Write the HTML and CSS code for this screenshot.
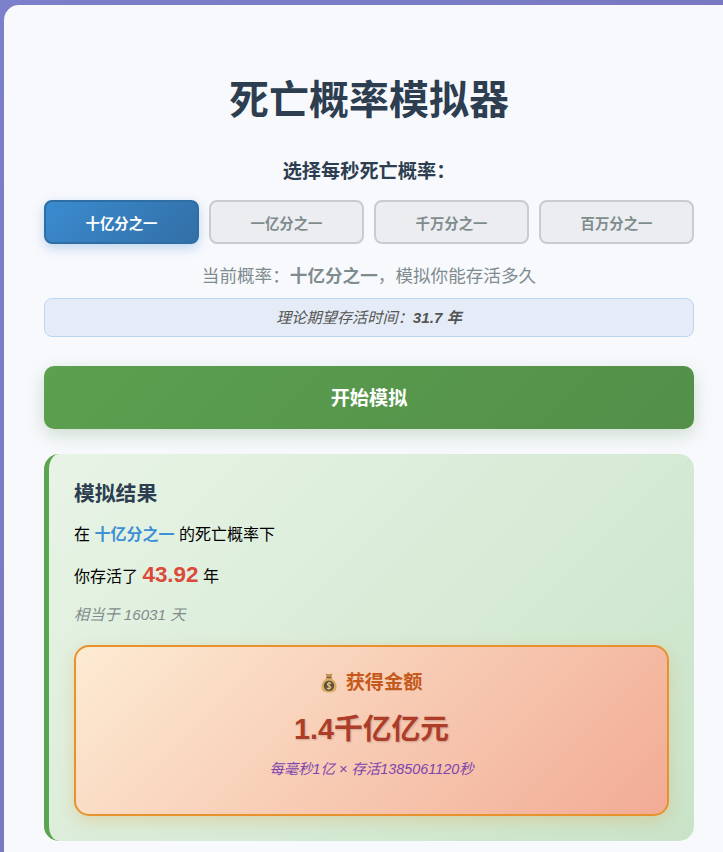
FILE: index.html
```html
<!DOCTYPE html>
<html lang="zh">
<head>
<meta charset="utf-8">
<title>死亡概率模拟器</title>
<link rel="stylesheet" href="styles.css">
</head>
<body>
<main class="card">
  <h1 class="title">死亡概率模拟器</h1>
  <h2 class="pick-label">选择每秒死亡概率：</h2>
  <div class="options">
    <button class="option active">十亿分之一</button>
    <button class="option">一亿分之一</button>
    <button class="option">千万分之一</button>
    <button class="option">百万分之一</button>
  </div>
  <p class="current">当前概率：<strong>十亿分之一</strong>，模拟你能存活多久</p>
  <div class="expect">理论期望存活时间：<strong>31.7 年</strong></div>
  <button class="start">开始模拟</button>
  <section class="result">
    <h3 class="result-title">模拟结果</h3>
    <p class="line">在 <strong class="rate">十亿分之一</strong> 的死亡概率下</p>
    <p class="line line-years">你存活了 <strong class="years">43.92</strong> 年</p>
    <p class="days">相当于 16031 天</p>
    <div class="money">
      <div class="money-title">
        <svg class="bag" viewBox="0 0 16 20" aria-hidden="true">
          <path d="M4.6 .6 Q8 2 11.4 .6 L10.2 4.6 H5.8 Z" fill="#b98f4e"/>
          <path d="M5.6 5 C2 7.6 .3 11 .4 14 C.6 18.4 4 19.6 8 19.6 C12 19.6 15.4 18.4 15.6 14 C15.7 11 14 7.6 10.4 5 Z" fill="#d8ae62"/>
          <rect x="5.2" y="3.9" width="5.6" height="1.4" rx=".7" fill="#7d5a2c"/>
          <circle cx="8" cy="12.8" r="5.2" fill="#5f5040"/>
          <path d="M10.2 10.6 C9 9.5 6.3 9.7 6.4 11.5 C6.5 13.2 9.9 12.4 9.9 14.3 C9.9 15.9 6.9 16 5.8 14.8 M8 8.8 V16.8" fill="none" stroke="#e9c87d" stroke-width="1.1"/>
        </svg>
        <span>获得金额</span>
      </div>
      <div class="amount">1.4千亿亿元</div>
      <div class="formula">每毫秒1亿 × 存活1385061120秒</div>
    </div>
  </section>
</main>
</body>
</html>
```
FILE: styles.css
```css
* { box-sizing: border-box; }
html, body { margin: 0; height: 100%; overflow: hidden; }
body {
  padding: 5px 0 0 4px;
  background: linear-gradient(135deg, #7c7fc9 0%, #7573b8 100%);
  font-family: "Liberation Sans", "Noto Sans CJK SC", sans-serif;
  width: 723px;
}
.card {
  width: 730px;
  height: 847px;
  padding: 70px 40px 0;
  background: #f8f9fd;
  border-radius: 15px 0 0 0;
}
.title {
  margin: 0 0 35px;
  font-size: 40px;
  line-height: 50px;
  font-weight: 700;
  color: #2c3e50;
  text-align: center;
}
.pick-label {
  margin: 0 0 16px;
  font-size: 19.2px;
  line-height: 24px;
  font-weight: 700;
  color: #2c3e50;
  text-align: center;
}
.options { display: grid; grid-template-columns: repeat(4, 155px); gap: 10px; }
.option {
  height: 44px;
  padding: 0;
  border: 2px solid #c8cbd0;
  border-radius: 8px;
  background: #ecedf1;
  color: #7f8c8d;
  font: 700 14.4px "Liberation Sans", "Noto Sans CJK SC", sans-serif;
}
.option.active {
  border-color: #2f6ea5;
  background: linear-gradient(135deg, #3b8bd0, #326fa6);
  color: #fff;
  box-shadow: 0 4px 12px rgba(52, 130, 200, .3);
}
.current {
  margin: 20px 0 0;
  font-size: 17.6px;
  line-height: 24px;
  color: #7f8c8d;
  text-align: center;
}
.expect {
  height: 39px;
  margin-top: 10px;
  border: 1px solid #bcd6f2;
  border-radius: 8px;
  background: #e5ecf7;
  color: #555;
  font-size: 15.2px;
  font-style: italic;
  line-height: 37px;
  text-align: center;
}
.start {
  display: block;
  width: 100%;
  height: 63px;
  margin-top: 29px;
  padding: 0 0 2px;
  border: 0;
  border-radius: 10px;
  background: linear-gradient(135deg, #5ba04f, #538f49);
  color: #fff;
  font: 700 19.2px "Liberation Sans", "Noto Sans CJK SC", sans-serif;
  box-shadow: 0 6px 18px rgba(80, 140, 70, .25);
}
.result {
  height: 387px;
  margin-top: 25px;
  padding: 25px;
  border-left: 5px solid #5ba450;
  border-radius: 15px;
  background: linear-gradient(135deg, #e8f4e6, #c9e3c8);
}
.result-title {
  margin: 0 0 13px;
  font-size: 20.8px;
  line-height: 30px;
  font-weight: 700;
  color: #2c3e50;
}
.line { margin: 0 0 14px; font-size: 16px; line-height: 26px; color: #000; }
.line-years { padding-top: 2px; margin-bottom: 12px; }
.rate { color: #3d8fd6; font-weight: 700; }
.years { color: #db4a38; font-size: 22.4px; line-height: 1; }
.days {
  margin: 0 0 17px;
  font-size: 15.2px;
  line-height: 26px;
  font-style: italic;
  color: #7f8c8d;
}
.money {
  height: 171px;
  padding-top: 22px;
  border: 2px solid #e8922e;
  border-radius: 15px;
  background: linear-gradient(135deg, #fdebd3, #f2ab94);
  box-shadow: 0 5px 16px rgba(232, 146, 46, .25);
  text-align: center;
}
.money-title {
  display: flex;
  justify-content: center;
  align-items: center;
  gap: 9px;
  font-size: 19.2px;
  line-height: 28px;
  font-weight: 700;
  color: #c5591b;
}
.bag { width: 16px; height: 20px; }
.amount {
  margin-top: 12px;
  font-size: 28.8px;
  line-height: 40px;
  font-weight: 700;
  color: #ad3d29;
  text-shadow: 1px 1px 2px rgba(0, 0, 0, .18);
}
.formula {
  margin-top: 10px;
  font-size: 14.4px;
  line-height: 20px;
  font-style: italic;
  color: #8044ad;
}
```
